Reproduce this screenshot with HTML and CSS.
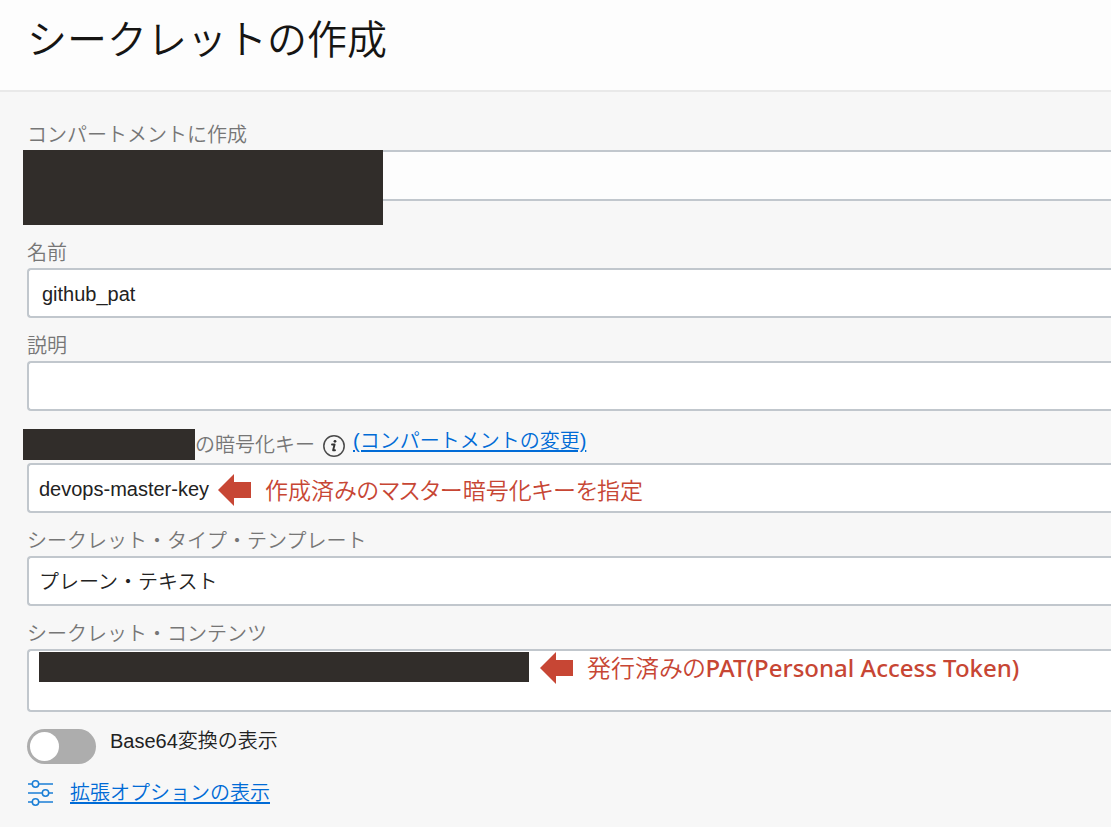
FILE: index.html
```html
<!DOCTYPE html>
<html lang="ja">
<head>
<meta charset="utf-8">
<meta name="viewport" content="width=device-width, initial-scale=1">
<title>シークレットの作成</title>
<link rel="stylesheet" href="styles.css">
</head>
<body>
<header class="page-header">
  <h1 class="page-title">シークレットの作成</h1>
</header>
<main>
  <form class="form">
    <div class="field">
      <label class="label" for="compartment">コンパートメントに作成</label>
      <div class="control control-masked">
        <select class="box box-muted" id="compartment"><option></option></select>
        <span class="mask mask-compartment"></span>
      </div>
    </div>
    <div class="field">
      <label class="label" for="name">名前</label>
      <input class="box box-text" id="name" type="text" value="github_pat">
    </div>
    <div class="field">
      <label class="label" for="description">説明</label>
      <input class="box box-text" id="description" type="text">
    </div>
    <div class="field">
      <div class="key-row">
        <span class="mask mask-label"></span>
        <label class="key-label" for="key">の暗号化キー</label>
        <button class="info" type="button" aria-label="情報">
          <svg width="22" height="22" viewBox="0 0 22 22" fill="none">
            <circle cx="11" cy="11" r="10.200" stroke="#4a4a4a" stroke-width="1.500"/>
            <circle cx="12" cy="6.300" r="1.400" fill="#333"/>
            <path d="M9 9.500h2.600l-1.500 5.800h1.900" stroke="#333" stroke-width="1.900" stroke-linecap="round" stroke-linejoin="round"/>
          </svg>
        </button>
        <a class="link" href="#">(コンパートメントの変更)</a>
      </div>
      <div class="control">
        <select class="box" id="key"><option>devops-master-key</option></select>
        <p class="note note-key">
          <svg width="33" height="32" viewBox="0 0 33 32"><path d="M0 16 16 0v8h17v16H16v8z" fill="#c74634"/></svg>
          <span>作成済みのマスター暗号化キーを指定</span>
        </p>
      </div>
    </div>
    <div class="field">
      <label class="label" for="template">シークレット・タイプ・テンプレート</label>
      <select class="box" id="template"><option>プレーン・テキスト</option></select>
    </div>
    <div class="field">
      <label class="label" for="contents">シークレット・コンテンツ</label>
      <div class="control">
        <textarea class="box box-area" id="contents"></textarea>
        <span class="mask mask-contents"></span>
        <p class="note note-contents">
          <svg width="33" height="32" viewBox="0 0 33 32"><path d="M0 16 16 0v8h17v16H16v8z" fill="#c74634"/></svg>
          <span>発行済みの<span class="latin">PAT(Personal Access Token)</span></span>
        </p>
      </div>
    </div>
    <div class="toggle-row">
      <input class="toggle" id="base64" type="checkbox" role="switch">
      <label class="toggle-label" for="base64">Base64変換の表示</label>
    </div>
    <div class="options-row">
      <svg width="26" height="26" viewBox="0 0 26 26" fill="none" stroke="#1b7fd6" stroke-width="1.500">
        <path d="M1 4h4M12 4h14M1 13h14M22 13h4M1 22h4M12 22h14"/>
        <circle cx="8.500" cy="4" r="3.200"/>
        <circle cx="18.500" cy="13" r="3.200"/>
        <circle cx="8.500" cy="22" r="3.200"/>
      </svg>
      <a class="link" href="#">拡張オプションの表示</a>
    </div>
  </form>
</main>
</body>
</html>
```
FILE: styles.css
```css
* {
  box-sizing: border-box;
}

body {
  margin: 0;
  background: #f7f7f7;
  color: #222;
  font-family: "Liberation Sans", "Noto Sans CJK JP", sans-serif;
  font-size: 20px;
  font-weight: 350;
  line-height: 24px;
  overflow-x: hidden;
}

.page-header {
  padding: 10px 27px 20px;
  background: #fdfdfd;
  border-bottom: 2px solid #e9e9e9;
}

.page-title {
  margin: 0;
  color: #161513;
  font-size: 40px;
  font-weight: 350;
  line-height: 60px;
}

.form {
  padding: 15px 0 19px 27px;
}

.field {
  display: flex;
  flex-direction: column;
  padding-top: 11px;
}

.label {
  padding-top: 2px;
  color: #767676;
  line-height: 30px;
}

.control {
  display: flex;
  position: relative;
}

.control-masked {
  padding-bottom: 24px;
}

.box {
  appearance: none;
  display: block;
  width: 100%;
  height: 50px;
  margin: 0;
  padding: 2px 10px 0;
  border: 2px solid #c1c7cd;
  border-right: 0;
  border-radius: 4px 0 0 4px;
  background: #fff;
  color: #222;
  font: inherit;
}

.box-text {
  padding: 2px 13px 0;
}

.box-muted {
  height: 51px;
  background: #fdfdfd;
}

.box-area {
  height: 63px;
  resize: none;
}

.mask {
  background: #312d2a;
}

.mask-compartment {
  position: absolute;
  top: 0;
  left: -4px;
  width: 360px;
  height: 75px;
}

.mask-label {
  width: 172px;
  height: 31px;
  margin-left: -4px;
}

.mask-contents {
  position: absolute;
  top: 3px;
  left: 12px;
  width: 490px;
  height: 30px;
}

.key-row {
  display: flex;
  align-items: flex-start;
  height: 41px;
  padding-top: 7px;
}

.key-label {
  color: #767676;
  line-height: 32px;
}

.info {
  display: flex;
  margin: 6px 8px 0;
  padding: 0;
  border: 0;
  background: none;
}

.link {
  color: #006bd6;
  text-decoration: underline;
  text-underline-offset: 2px;
}

.note {
  display: flex;
  align-items: center;
  gap: 14px;
  position: absolute;
  margin: 0;
  color: #c74634;
  font-family: "Noto Sans", "Noto Sans CJK JP", sans-serif;
  font-size: 24px;
  font-feature-settings: "palt";
  line-height: 32px;
  white-space: nowrap;
  pointer-events: none;
}

.note-key {
  top: 11px;
  left: 191px;
  font-size: 23px;
}

.note-contents {
  top: 3px;
  left: 513px;
}

.latin {
  font-weight: 500;
}

.toggle-row {
  display: flex;
  gap: 14px;
  padding-top: 17px;
}

.toggle {
  appearance: none;
  display: flex;
  width: 69px;
  height: 35px;
  margin: 0;
  padding: 3px;
  border-radius: 18px;
  background: #adadad;
}

.toggle::before {
  content: "";
  width: 29px;
  height: 29px;
  border-radius: 50%;
  background: #fff;
}

.toggle:checked {
  background: #1b7fd6;
  justify-content: flex-end;
}

.options-row {
  display: flex;
  align-items: center;
  gap: 17px;
  padding-top: 16px;
}
```
